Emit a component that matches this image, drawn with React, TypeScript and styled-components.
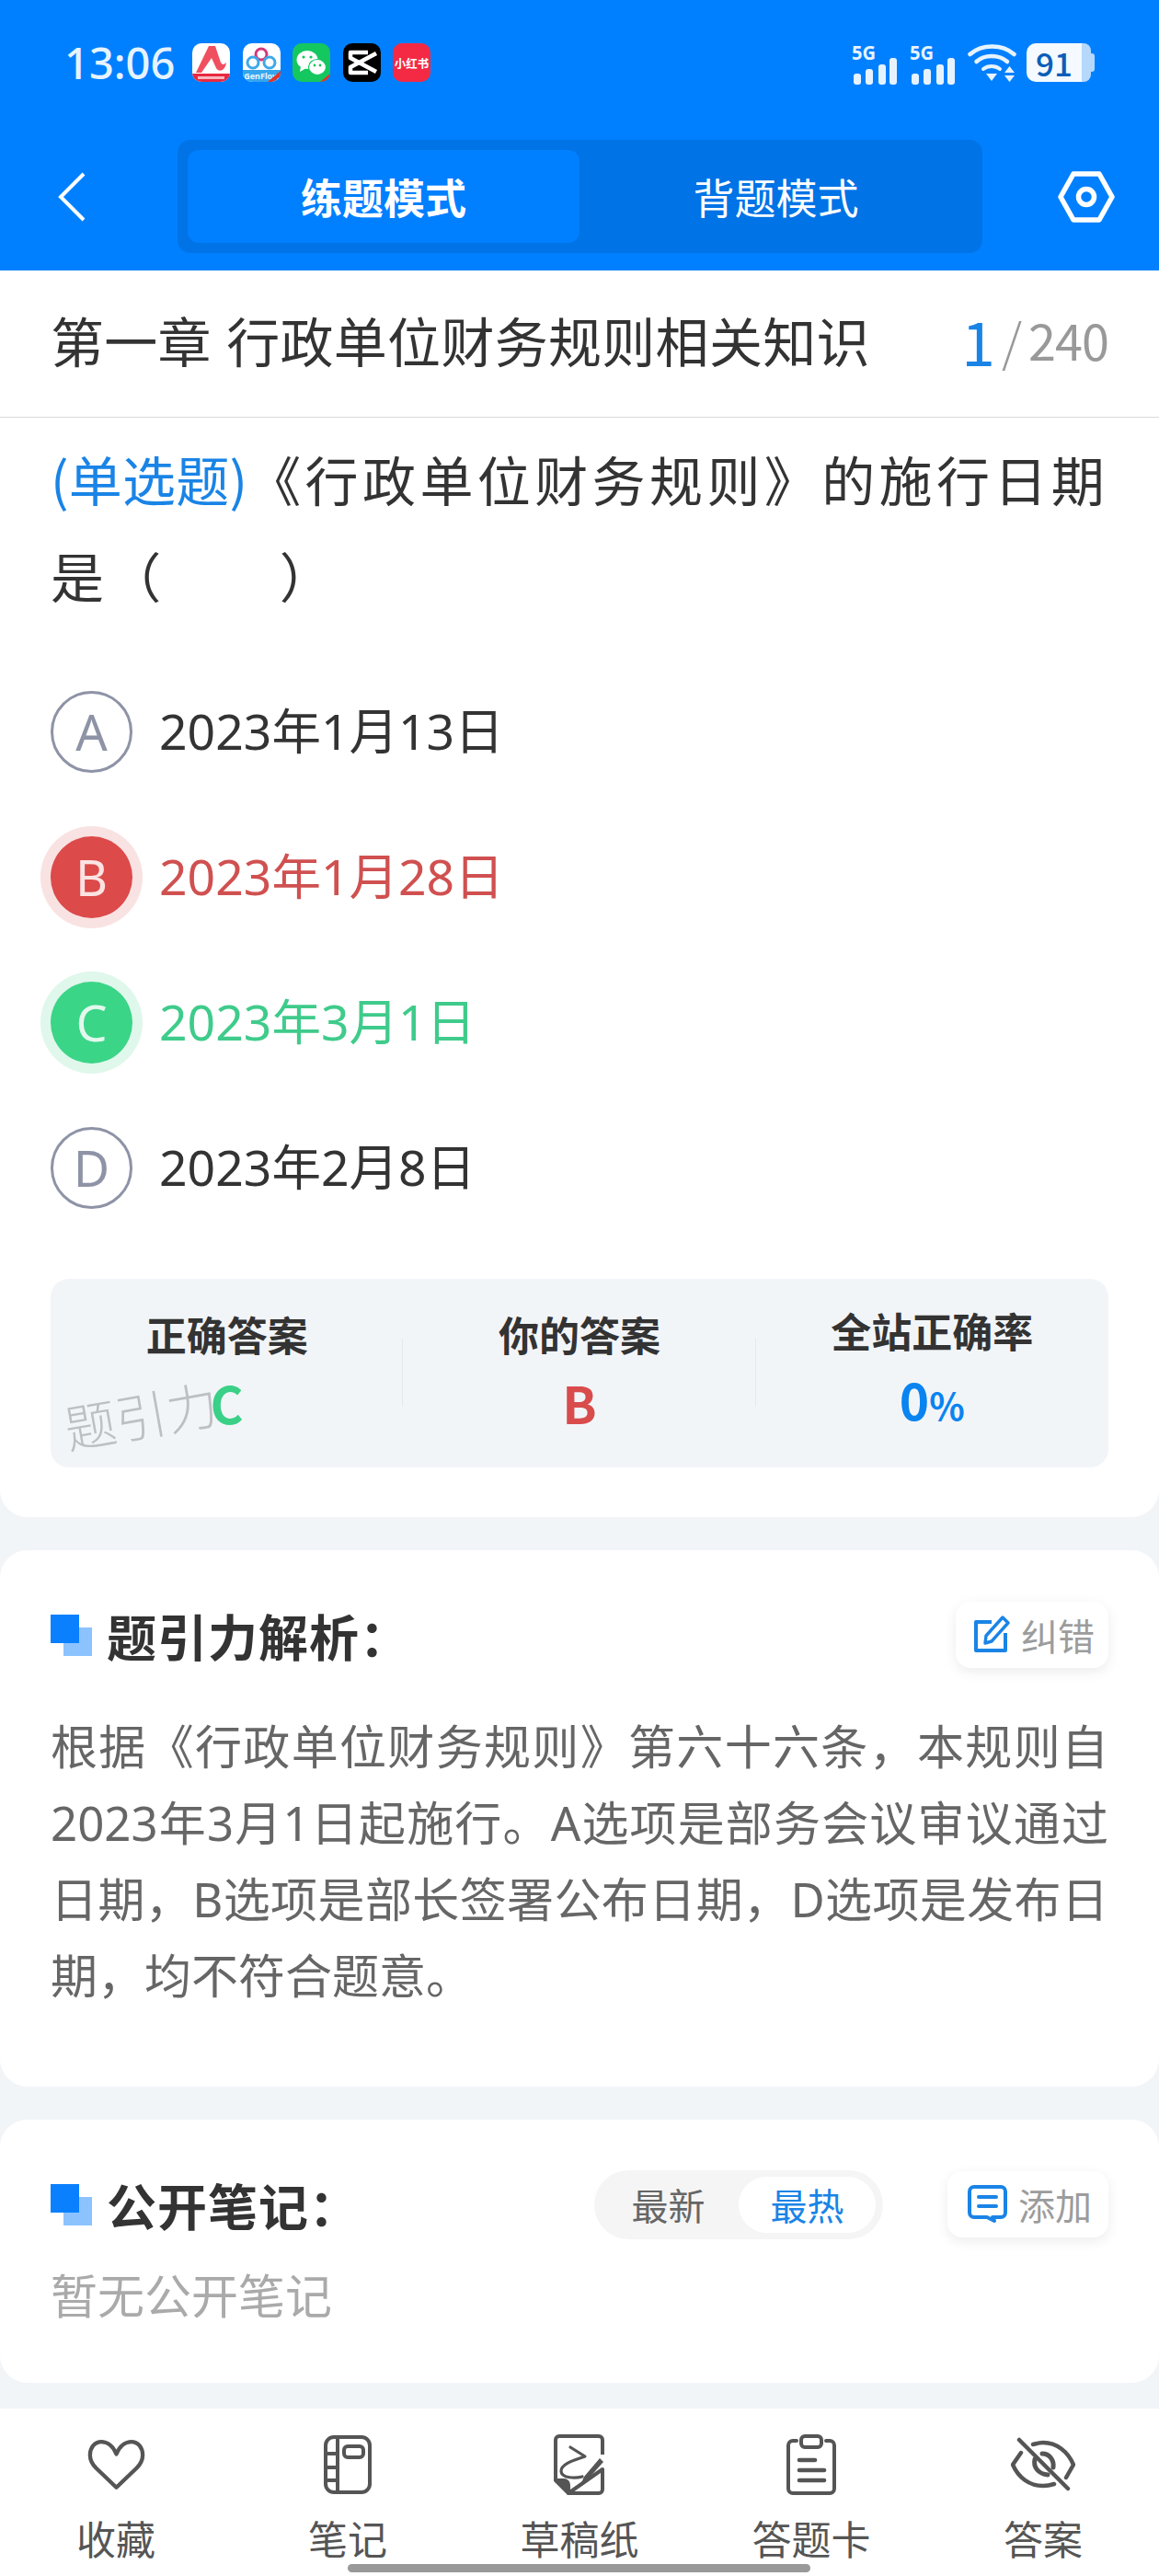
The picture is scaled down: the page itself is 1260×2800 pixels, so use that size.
import React from "react";
import styled, { createGlobalStyle } from "styled-components";

const FONT = `"Noto Sans CJK SC", "Noto Sans", sans-serif`;
const LATIN_FIRST = `"Noto Sans", "Noto Sans CJK SC", sans-serif`;

const Global = createGlobalStyle`
  html, body { margin: 0; padding: 0; background: #f2f5f8; }
  body { width: 1260px; font-family: ${FONT}; }
  * { box-sizing: border-box; }
`;

const Page = styled.div`
  position: relative;
  width: 1260px;
  height: 2800px;
  display: flex;
  flex-direction: column;
  overflow: hidden;
  background: #f2f5f8;
`;

const Header = styled.header`
  height: 294px;
  background: #0080ff;
  flex-shrink: 0;
`;

const StatusBar = styled.div`
  height: 136px;
  padding: 0 70px 0 70px;
  display: flex;
  align-items: center;
`;

const Clock = styled.span`
  width: 139px;
  font-family: "Noto Sans", sans-serif;
  font-size: 47px;
  font-weight: 500;
  color: #e6f3ff;
`;

const AppTray = styled.div`
  display: flex;
  gap: 13.5px;
  flex: 1;
`;

const AppTile = styled.div<{ $bg: string }>`
  width: 41px;
  height: 42px;
  border-radius: 10px;
  background: ${(p) => p.$bg};
  display: flex;
  align-items: center;
  justify-content: center;
  overflow: hidden;
  font-size: 12.5px;
  font-weight: 700;
  color: #fff;
  white-space: nowrap;
`;

const Indicators = styled.div`
  display: flex;
  align-items: center;
  gap: 10px;
`;

const Battery = styled.div`
  width: 74px;
  height: 42px;
  display: flex;
  align-items: stretch;
`;

const BatteryLevel = styled.div`
  width: 60px;
  background: #f4faff;
  border-radius: 10px 0 0 10px;
  color: #0a5fb8;
  font-size: 35px;
  font-weight: 500;
  line-height: 41px;
  text-align: center;
`;

const BatteryRest = styled.div`
  width: 10px;
  background: #b5d8fb;
  border-radius: 0 8px 8px 0;
`;

const BatteryNub = styled.div`
  width: 4px;
  height: 20px;
  margin-top: 11px;
  background: #b5d8fb;
  border-radius: 0 3px 3px 0;
`;

const NavBar = styled.nav`
  margin-top: 16px;
  height: 123px;
  display: grid;
  grid-template-columns: 193px 875px 1fr;
  align-items: center;
`;

const BackSlot = styled.div`
  padding-left: 62px;
  display: flex;
`;

const SettingsSlot = styled.div`
  padding-left: 82px;
  display: flex;
`;

const ModeSwitch = styled.div`
  height: 123px;
  padding: 11px;
  border-radius: 14px;
  background: #0073e6;
  display: grid;
  grid-template-columns: 426px 1fr;
`;

const ModeTab = styled.div<{ $active?: boolean }>`
  border-radius: 12px;
  background: ${(p) => (p.$active ? "#007fff" : "transparent")};
  color: #fff;
  font-size: 45px;
  font-weight: ${(p) => (p.$active ? 700 : 400)};
  display: flex;
  align-items: center;
  justify-content: center;
`;

const ChapterRow = styled.div`
  height: 160px;
  flex-shrink: 0;
  background: #fff;
  border-bottom: 1px solid #d9d9d9;
  padding: 0 55px 10px 55px;
  display: flex;
  align-items: center;
  justify-content: space-between;
`;

const ChapterTitle = styled.h1`
  margin: 0;
  font-size: 58px;
  font-weight: 400;
  letter-spacing: 0.3px;
  word-spacing: 3px;
  color: #333;
  white-space: nowrap;
`;

const Progress = styled.div`
  display: flex;
  align-items: center;
  color: #999;
  font-size: 54px;
  letter-spacing: -1px;
`;

const ProgressNow = styled.span`
  font-size: 66px;
  color: #1a84e6;
  margin-right: 8px;
`;

const ProgressSep = styled.span`
  font-size: 56px;
  font-weight: 300;
  margin-right: 8px;
`;

const QuestionCard = styled.section`
  flex-shrink: 0;
  background: #fff;
  border-radius: 0 0 30px 30px;
  padding: 14px 55px 54px;
`;

const Question = styled.p`
  margin: 0 0 38px;
  font-size: 58px;
  line-height: 105px;
  letter-spacing: 4.2px;
  color: #333;
  text-align: justify;
`;

const QuestionType = styled.span`
  color: #1a84e6;
  letter-spacing: 0;
`;

const OptionRow = styled.div`
  height: 158px;
  display: flex;
  align-items: center;
  gap: 29px;
`;

const badgeTone = { plain: "#8e93a6", wrong: "#dc4a4a", right: "#3ad587" };
const textTone = { plain: "#333333", wrong: "#d05050", right: "#3fcb8b" };

const OptionBadge = styled.div<{ $state: keyof typeof badgeTone }>`
  width: 89px;
  height: 89px;
  border-radius: 50%;
  display: flex;
  align-items: center;
  justify-content: center;
  font-family: "Noto Sans", sans-serif;
  font-size: 54px;
  flex-shrink: 0;
  ${(p) =>
    p.$state === "plain"
      ? "border: 3px solid #8e93a6; color: #8e93a6; background: #fff;"
      : `background: ${badgeTone[p.$state]}; color: ${
          p.$state === "wrong" ? "#fbe3e3" : "#e2f8ed"
        }; box-shadow: 0 0 0 11px ${p.$state === "wrong" ? "#f9e2e2" : "#e0f7ec"};`}
`;

const OptionText = styled.span<{ $state: keyof typeof textTone }>`
  font-family: ${LATIN_FIRST};
  font-size: 53.5px;
  padding-bottom: 6px;
  color: ${(p) => textTone[p.$state]};
`;

const AnswerPanel = styled.div`
  position: relative;
  margin-top: 42px;
  height: 205px;
  border-radius: 20px;
  background: #f2f5f8;
  display: grid;
  grid-template-columns: repeat(3, 1fr);
  align-items: center;
`;

const AnswerCell = styled.div<{ $divider?: boolean }>`
  position: relative;
  margin-top: -12px;
  display: flex;
  flex-direction: column;
  align-items: center;
  gap: 12px;
  ${(p) =>
    p.$divider
      ? `&::after {
          content: "";
          position: absolute;
          right: 0;
          top: 36px;
          height: 74px;
          width: 1px;
          background: #e6e9ec;
        }`
      : ""}
`;

const AnswerLabel = styled.div`
  font-size: 44px;
  line-height: 62px;
  font-weight: 700;
  color: #333;
`;

const AnswerValue = styled.div<{ $color: string }>`
  font-size: 55px;
  line-height: 62px;
  font-weight: 700;
  color: ${(p) => p.$color};
`;

const Percent = styled.span`
  font-size: 40px;
`;

const Watermark = styled.div`
  position: absolute;
  left: 14px;
  top: 112px;
  font-size: 56px;
  font-weight: 300;
  line-height: 70px;
  color: #bdbfc2;
  white-space: nowrap;
  transform: rotate(-10deg);
`;

const Card = styled.section<{ $pad: number }>`
  flex-shrink: 0;
  background: #fff;
  border-radius: 30px;
  margin-top: 36px;
  padding: 55px 55px ${(p) => p.$pad}px;
`;

const CardHead = styled.div`
  height: 74px;
  display: flex;
  align-items: center;
`;

const BlockMark = styled.div`
  position: relative;
  width: 45px;
  height: 45px;
  margin-right: 16px;
  flex-shrink: 0;
  &::before {
    content: "";
    position: absolute;
    right: 0;
    bottom: 0;
    width: 31px;
    height: 31px;
    background: #8cc3ff;
  }
  &::after {
    content: "";
    position: absolute;
    left: 0;
    top: 0;
    width: 31px;
    height: 31px;
    background: #0a80ff;
  }
`;

const CardTitle = styled.h2`
  margin: 0;
  flex: 1;
  font-size: 54px;
  font-weight: 700;
  color: #333;
  letter-spacing: 1px;
`;

const ChipButton = styled.div<{ $width: number }>`
  width: ${(p) => p.$width}px;
  height: 72px;
  padding-left: 4px;
  border-radius: 16px;
  background: #fff;
  box-shadow: 0 4px 14px rgba(0, 0, 0, 0.08);
  display: flex;
  align-items: center;
  justify-content: center;
  gap: 12px;
  font-size: 40px;
  color: #9c9c9c;
`;

const Explanation = styled.p`
  margin: 43px 0 3px;
  font-family: ${LATIN_FIRST};
  font-size: 51px;
  line-height: 83px;
  color: #666;
  text-align: justify;
`;

const SortSwitch = styled.div`
  width: 314px;
  height: 75px;
  margin-right: 70px;
  padding: 7px 8px 7px 0;
  border-radius: 38px;
  background: #f5f5f5;
  display: grid;
  grid-template-columns: 157px 149px;
`;

const SortOption = styled.div<{ $active?: boolean }>`
  border-radius: 31px;
  background: ${(p) => (p.$active ? "#fff" : "transparent")};
  color: ${(p) => (p.$active ? "#1a84e6" : "#666")};
  padding-left: ${(p) => (p.$active ? 0 : 4)}px;
  font-size: 40px;
  display: flex;
  align-items: center;
  justify-content: center;
`;

const EmptyNote = styled.div`
  margin-top: 25px;
  font-size: 51px;
  line-height: 70px;
  color: #aaa;
`;

const BottomBar = styled.footer`
  margin-top: auto;
  height: 182px;
  background: #fff;
  display: grid;
  grid-template-columns: repeat(5, 1fr);
  padding-top: 27px;
`;

const BarItem = styled.div`
  display: flex;
  flex-direction: column;
  align-items: center;
  gap: 17px;
`;

const BarIcon = styled.div`
  height: 66px;
  padding-top: 2px;
  display: flex;
  align-items: center;
  justify-content: center;
`;

const BarLabel = styled.span`
  font-size: 43px;
  line-height: 60px;
  color: #555;
`;

const HomeIndicator = styled.div`
  position: absolute;
  left: 378px;
  bottom: 4px;
  width: 503px;
  height: 9px;
  border-radius: 5px;
  background: #999;
`;

/* Mobile signal glyph: network label over four rising bars. */
const Signal = () => (
  <svg width="53" height="52" viewBox="0 -6 53 52">
    <text x="0" y="17" fontFamily="'Noto Sans', sans-serif" fontSize="22" fontWeight="700" fill="#e6f3ff" textLength="26" lengthAdjust="spacingAndGlyphs">
      5G
    </text>
    <g fill="#e6f3ff">
      <rect x="2" y="32" width="8" height="12" rx="3" />
      <rect x="15" y="27" width="8" height="17" rx="3" />
      <rect x="29" y="22" width="8" height="22" rx="3" />
      <rect x="41" y="15" width="8" height="29" rx="3" />
    </g>
  </svg>
);

const Wifi = () => (
  <svg width="54" height="44" viewBox="0 0 54 44" fill="none" stroke="#e6f3ff" strokeLinecap="round">
    <path d="M2.5 13 C15 1.5 38 1.5 50.5 13" strokeWidth="4.5" />
    <path d="M9.5 21 C18 13 34 13 43 21" strokeWidth="4.5" />
    <path d="M17 29 C22 25 30 25 35 29" strokeWidth="4" />
    <path d="M20 34 H32 L26 42 Z" fill="#e6f3ff" stroke="none" />
    <path d="M40 33 L45.5 26 L51 33 Z M40 36 H51 L45.5 43 Z" fill="#e6f3ff" stroke="none" />
  </svg>
);

const Chevron = () => (
  <svg width="32" height="56" viewBox="0 0 32 56" fill="none">
    <path d="M29 3 L4 28 L29 53" stroke="#fff" strokeWidth="4" />
  </svg>
);

const HexNut = () => (
  <svg width="62" height="56" viewBox="0 0 62 56" fill="none" stroke="#fff" strokeWidth="5.5" strokeLinejoin="round">
    <path d="M17 3 H45 L59 28 L45 53 H17 L3 28 Z" />
    <circle cx="31" cy="28" r="8.5" />
  </svg>
);

const EditIcon = () => (
  <svg width="40" height="42" viewBox="0 0 40 42" fill="none" stroke="#1a84e6" strokeWidth="4">
    <path d="M20 7 H3 V38 H35 V19" strokeLinejoin="round" />
    <path d="M32 2 L38 8 L20 28 L13 30 L14 22 Z" strokeWidth="3.4" strokeLinejoin="round" />
  </svg>
);

const CommentIcon = () => (
  <svg width="43" height="44" viewBox="0 0 43 44" fill="none" stroke="#1a84e6" strokeWidth="4" strokeLinecap="round">
    <path d="M7 3 H36 A5 5 0 0 1 41 8 V31 A5 5 0 0 1 36 36 H27 L29 40 L21 36 H7 A5 5 0 0 1 2 31 V8 A5 5 0 0 1 7 3 Z" strokeLinejoin="round" />
    <path d="M12 14 H31 M12 24 H31" />
  </svg>
);

const HeartIcon = () => (
  <svg width="63" height="56" viewBox="0 0 66 58" fill="none" stroke="#555" strokeWidth="4.5" strokeLinejoin="round">
    <path d="M33 17 C29 7 22 3 16 3 C8 3 3 10 3 18 C3 24 6 29 10 33 L33 55 L56 33 C60 29 63 24 63 18 C63 10 58 3 50 3 C44 3 37 7 33 17 Z" />
  </svg>
);

const NotebookIcon = () => (
  <svg width="52" height="64" viewBox="0 0 52 64" fill="none" stroke="#555" strokeWidth="4">
    <rect x="2" y="2" width="48" height="60" rx="9" />
    <path d="M15 2 V62 M2 20 H15 M2 35 H15 M2 49 H15" />
    <rect x="22" y="12" width="21" height="12" rx="4" />
  </svg>
);

const DraftIcon = () => (
  <svg width="56" height="66" viewBox="0 0 56 66" fill="none" stroke="#555" strokeWidth="4" strokeLinejoin="round">
    <path d="M2 50 V6 A4 4 0 0 1 6 2 H49 A4 4 0 0 1 53 6 V22 M53 38 V60 A4 4 0 0 1 49 64 H16 Z" />
    <path d="M2 50 H11 A5 5 0 0 1 16 55 V64 Z" fill="#555" />
    <path d="M18 14 L34 24 C27 27 8 31 8 40 C8 48 24 48 31 46" strokeWidth="3.2" strokeLinecap="round" />
    <path d="M50 26 L33 46 L30 53 L37 49 L54 30 Z" fill="#555" stroke="none" />
  </svg>
);

const ClipboardIcon = () => (
  <svg width="54" height="66" viewBox="0 0 54 66" fill="none" stroke="#555" strokeWidth="4" strokeLinecap="round">
    <path d="M11 7 H7 A5 5 0 0 0 2 12 V59 A5 5 0 0 0 7 64 H47 A5 5 0 0 0 52 59 V12 A5 5 0 0 0 47 7 H43" />
    <rect x="16" y="2" width="22" height="12" rx="4" />
    <path d="M14 28 H31" strokeWidth="4.6" />
    <path d="M14 39 H41" strokeWidth="4.6" />
    <path d="M14 50 H41" strokeWidth="4.6" />
  </svg>
);

const EyeOffIcon = () => (
  <svg width="70" height="60" viewBox="0 0 70 60" fill="none" stroke="#555" strokeWidth="4.5" strokeLinecap="round">
    <path d="M9 3 L62 56" />
    <path d="M11 17 L2 30 C8 44 20 53 35 53 C40 53 44 52 47 51" strokeLinejoin="round" />
    <path d="M24 8 C28 7 31 6 35 6 C50 6 62 16 68 30 L60 44" strokeLinejoin="round" />
    <path d="M26 24 C24 33 30 40 40 41" strokeWidth="5" />
    <path d="M34 18 C42 18 47 25 46 33" strokeWidth="5" />
  </svg>
);

const RedA = () => (
  <svg width="41" height="42" viewBox="0 0 41 42">
    <path d="M18 3 H25 L31 21 C33 24 35 23 37 21 C36 30 29 32 26 27 L21 16 L10 32 H4 Z" fill="#ef4f5f" />
    <path d="M0 33 H41 V37 A5 5 0 0 1 36 42 H5 A5 5 0 0 1 0 37 Z" fill="#e8293f" />
    <rect x="6" y="36" width="29" height="3" fill="#f7b8bf" />
  </svg>
);

const GenFlow = () => (
  <svg width="41" height="42" viewBox="0 0 41 42" fill="none">
    <path d="M0 29 H41 V42 H0 Z" fill="#34a5ee" />
    <circle cx="20" cy="12" r="6" stroke="#d7367a" strokeWidth="3" />
    <circle cx="11" cy="21" r="6" stroke="#3fa9e8" strokeWidth="3" />
    <circle cx="29" cy="21" r="6" stroke="#3fa9e8" strokeWidth="3" />
    <text x="20.5" y="39" textAnchor="middle" fontFamily="'Noto Sans', sans-serif" fontSize="9" fontWeight="700" fill="#e9f6ff">
      GenFlow
    </text>
    <path d="M41 30 V36 L33 42 H27 Z" fill="#e0352b" />
  </svg>
);

const WeChat = () => (
  <svg width="41" height="42" viewBox="0 0 41 42">
    <ellipse cx="16" cy="18" rx="11.5" ry="10" fill="#fff" />
    <path d="M9 25 L8 31 L15 27 Z" fill="#fff" />
    <ellipse cx="27" cy="26" rx="9.5" ry="8.5" fill="#fff" stroke="#14c75f" strokeWidth="1.2" />
    <circle cx="12" cy="15" r="1.6" fill="#14c75f" />
    <circle cx="20" cy="15" r="1.6" fill="#14c75f" />
    <circle cx="24" cy="24" r="1.4" fill="#14c75f" />
    <circle cx="30" cy="24" r="1.4" fill="#14c75f" />
    <path d="M41 33 V37 L35 42 H30 Z" fill="#e0352b" />
  </svg>
);

const CapCut = () => (
  <svg width="41" height="42" viewBox="0 0 41 42" fill="none" stroke="#fff" strokeWidth="4.5" strokeLinejoin="round">
    <path d="M36 11 L8 26 V32 H27" />
    <path d="M36 31 L8 16 V10 H27" />
  </svg>
);

export default function App() {
  return (
    <Page>
      <Global />
      <Header>
        <StatusBar>
          <Clock>13:06</Clock>
          <AppTray>
            <AppTile $bg="#fff"><RedA /></AppTile>
            <AppTile $bg="#fff"><GenFlow /></AppTile>
            <AppTile $bg="#14c75f"><WeChat /></AppTile>
            <AppTile $bg="#000"><CapCut /></AppTile>
            <AppTile $bg="#f42a45">小红书</AppTile>
          </AppTray>
          <Indicators>
            <Signal />
            <Signal />
            <Wifi />
            <Battery>
              <BatteryLevel>91</BatteryLevel>
              <BatteryRest />
              <BatteryNub />
            </Battery>
          </Indicators>
        </StatusBar>
        <NavBar>
          <BackSlot><Chevron /></BackSlot>
          <ModeSwitch>
            <ModeTab $active>练题模式</ModeTab>
            <ModeTab>背题模式</ModeTab>
          </ModeSwitch>
          <SettingsSlot><HexNut /></SettingsSlot>
        </NavBar>
      </Header>

      <ChapterRow>
        <ChapterTitle>第一章 行政单位财务规则相关知识</ChapterTitle>
        <Progress>
          <ProgressNow>1</ProgressNow>
          <ProgressSep>/</ProgressSep>
          240
        </Progress>
      </ChapterRow>

      <QuestionCard>
        <Question>
          <QuestionType>(单选题)</QuestionType>《行政单位财务规则》的施行日期是（　　）
        </Question>
        <OptionRow>
          <OptionBadge $state="plain">A</OptionBadge>
          <OptionText $state="plain">2023年1月13日</OptionText>
        </OptionRow>
        <OptionRow>
          <OptionBadge $state="wrong">B</OptionBadge>
          <OptionText $state="wrong">2023年1月28日</OptionText>
        </OptionRow>
        <OptionRow>
          <OptionBadge $state="right">C</OptionBadge>
          <OptionText $state="right">2023年3月1日</OptionText>
        </OptionRow>
        <OptionRow>
          <OptionBadge $state="plain">D</OptionBadge>
          <OptionText $state="plain">2023年2月8日</OptionText>
        </OptionRow>
        <AnswerPanel>
          <AnswerCell $divider>
            <AnswerLabel>正确答案</AnswerLabel>
            <AnswerValue $color="#3ad087">C</AnswerValue>
          </AnswerCell>
          <AnswerCell $divider>
            <AnswerLabel>你的答案</AnswerLabel>
            <AnswerValue $color="#d94c4c">B</AnswerValue>
          </AnswerCell>
          <AnswerCell>
            <AnswerLabel>全站正确率</AnswerLabel>
            <AnswerValue $color="#0a84f0">0<Percent>%</Percent></AnswerValue>
          </AnswerCell>
          <Watermark>题引力</Watermark>
        </AnswerPanel>
      </QuestionCard>

      <Card $pad={76}>
        <CardHead>
          <BlockMark />
          <CardTitle>题引力解析：</CardTitle>
          <ChipButton $width={166}><EditIcon />纠错</ChipButton>
        </CardHead>
        <Explanation>
          根据《行政单位财务规则》第六十六条，本规则自2023年3月1日起施行。A选项是部务会议审议通过日期，B选项是部长签署公布日期，D选项是发布日期，均不符合题意。
        </Explanation>
      </Card>

      <Card $pad={62}>
        <CardHead>
          <BlockMark />
          <CardTitle>公开笔记：</CardTitle>
          <SortSwitch>
            <SortOption>最新</SortOption>
            <SortOption $active>最热</SortOption>
          </SortSwitch>
          <ChipButton $width={175}><CommentIcon />添加</ChipButton>
        </CardHead>
        <EmptyNote>暂无公开笔记</EmptyNote>
      </Card>

      <BottomBar>
        <BarItem><BarIcon><HeartIcon /></BarIcon><BarLabel>收藏</BarLabel></BarItem>
        <BarItem><BarIcon><NotebookIcon /></BarIcon><BarLabel>笔记</BarLabel></BarItem>
        <BarItem><BarIcon><DraftIcon /></BarIcon><BarLabel>草稿纸</BarLabel></BarItem>
        <BarItem><BarIcon><ClipboardIcon /></BarIcon><BarLabel>答题卡</BarLabel></BarItem>
        <BarItem><BarIcon><EyeOffIcon /></BarIcon><BarLabel>答案</BarLabel></BarItem>
      </BottomBar>
      <HomeIndicator />
    </Page>
  );
}
